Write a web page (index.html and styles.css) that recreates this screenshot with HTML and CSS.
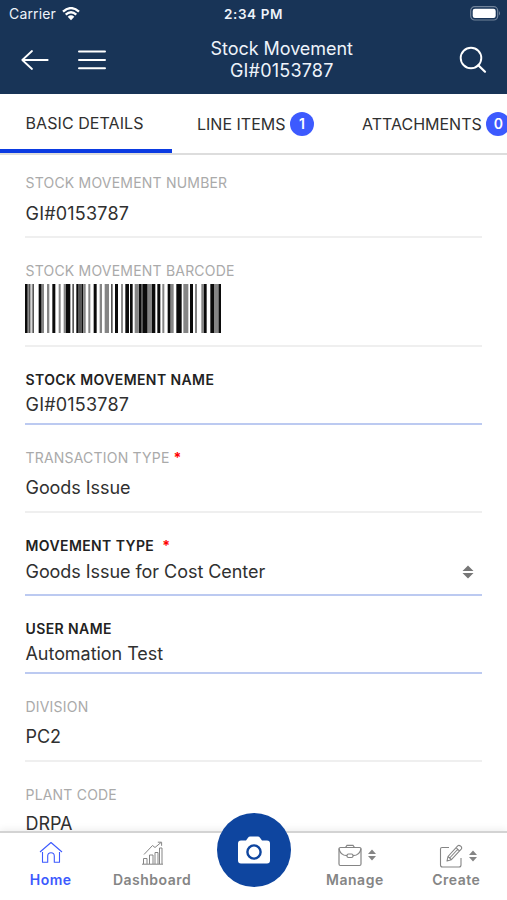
FILE: index.html
```html
<!DOCTYPE html>
<html lang="en">
<head>
<meta charset="utf-8">
<meta name="viewport" content="width=device-width, initial-scale=1">
<title>Stock Movement</title>
<link rel="stylesheet" href="styles.css">
</head>
<body>
<div class="app">
  <header class="header">
    <div class="status">
      <div class="carrier"><span>Carrier</span>
        <svg width="18" height="14" viewBox="0 0 18 14"><path d="M1 4.7Q9-2.5 17 4.7M3.7 7.6Q9 2.9 14.3 7.6" fill="none" stroke="#fff" stroke-width="2.3"/><path d="M5.7 9.7Q9 7 12.3 9.7L9 13.2Z" fill="#fff"/></svg>
      </div>
      <div class="time">2:34 PM</div>
      <svg class="battery" width="31" height="15" viewBox="0 0 31 15"><rect x=".7" y=".7" width="27" height="13.3" rx="4" fill="none" stroke="#71839a" stroke-width="1.2"/><rect x="2.7" y="2.7" width="23" height="9.3" rx="2.2" fill="#fff"/><path d="M29 5Q31 7.3 29 9.6Z" fill="#71839a"/></svg>
    </div>
    <div class="navbar">
      <div class="nav-left">
        <svg width="28" height="22" viewBox="0 0 28 22"><path d="M26.7 11H1.4M11 2L1.3 11L11 20" fill="none" stroke="#fff" stroke-width="1.8" stroke-linecap="round" stroke-linejoin="round"/></svg>
        <svg width="28" height="22" viewBox="0 0 28 22"><path d="M1 2.6H27M1 10.9H27M1 19.2H27" stroke="#fff" stroke-width="2" stroke-linecap="round"/></svg>
      </div>
      <h1 class="title">Stock Movement<br><span class="number">GI#0153787</span></h1>
      <svg class="search" width="28" height="28" viewBox="0 0 28 28"><circle cx="12" cy="12" r="10.3" fill="none" stroke="#fff" stroke-width="1.9"/><path d="M19.3 19.2L26 25.7" stroke="#fff" stroke-width="2.2" stroke-linecap="round"/></svg>
    </div>
  </header>
  <nav class="tabs">
    <div class="tab active">BASIC DETAILS</div>
    <div class="tab items">LINE ITEMS<span class="count">1</span></div>
    <div class="tab attach">ATTACHMENTS<span class="count">0</span></div>
  </nav>
  <main class="fields">
    <div class="field first"><div class="label">STOCK MOVEMENT NUMBER</div><div class="value number">GI#0153787</div></div>
    <div class="field code"><div class="label">STOCK MOVEMENT BARCODE</div>
      <svg class="barcode" width="197" height="49" viewBox="76 0 591 147" preserveAspectRatio="none">
        <path fill="#0b0b0b" d="M76 0h8v147h-8zM117 0h9v147h-9zM158 0h9v147h-9zM199 0h13v147h-13zM230 0h7v147h-7zM245 0h6v147h-6zM282 0h9v147h-9zM346 0h9v147h-9zM377 0h11v147h-11zM391 0h8v147h-8zM417 0h9v147h-9zM430 0h14v147h-14zM457 0h10v147h-10zM473 0h9v147h-9zM504 0h9v147h-9zM530 0h16v147h-16zM571 0h9v147h-9zM613 0h8v147h-8zM632 0h11v147h-11zM656 0h8v147h-8z"/>
        <path fill="#555" d="M86 0h5v147h-5zM98 0h5v147h-5zM218 0h5v147h-5zM237 0h8v147h-8zM334 0h5v147h-5zM365 0h4v147h-4zM426 0h4v147h-4z"/>
        <path fill="#858585" d="M92 0h3v147h-3zM126 0h7v147h-7zM142 0h7v147h-7zM177 0h6v147h-6zM192 0h7v147h-7zM251 0h7v147h-7zM266 0h6v147h-6zM300 0h7v147h-7zM315 0h13v147h-13zM405 0h12v147h-12zM444 0h13v147h-13zM488 0h6v147h-6zM513 0h9v147h-9zM551 0h15v147h-15zM586 0h6v147h-6zM605 0h8v147h-8zM643 0h13v147h-13z"/>
      </svg>
    </div>
    <div class="field edit"><div class="label">STOCK MOVEMENT NAME</div><div class="value number">GI#0153787</div></div>
    <div class="field"><div class="label">TRANSACTION TYPE<span class="req">*</span></div><div class="value">Goods Issue</div></div>
    <div class="field edit select"><div class="label">MOVEMENT TYPE<span class="req">*</span></div><div class="value"><span>Goods Issue for Cost Center</span>
      <svg width="12" height="14" viewBox="0 0 12 14"><path d="M6 .5L11.5 6H.5ZM6 13.5L.5 8H11.5Z" fill="#777"/></svg></div></div>
    <div class="field edit"><div class="label">USER NAME</div><div class="value">Automation Test</div></div>
    <div class="field"><div class="label">DIVISION</div><div class="value">PC2</div></div>
    <div class="field last"><div class="label">PLANT CODE</div><div class="value">DRPA</div></div>
  </main>
  <footer class="bottom">
    <div class="item home"><div class="icon">
      <svg width="24" height="24" viewBox="0 0 24 24" fill="none" stroke="currentColor" stroke-width="1.1" stroke-linejoin="round"><path d="M1 11L12 1.5L23 11M3.5 11V21.3H8.7V15Q8.7 11.7 12 11.7T15.3 15V21.3H20.5V11"/></svg></div><span>Home</span></div>
    <div class="item dashboard"><div class="icon">
      <svg width="24" height="24" viewBox="0 0 24 24" fill="none" stroke="currentColor" stroke-width="1"><path d="M1 23.2H22M2.5 23V17.5H6V23M8.5 23V14H12V23M14 23V11.5H17V23M18.5 23V7H21V23M3 13.5L11.5 4.5L14 6.5L20 1.5M16.8 1.2H20.6V4.8"/></svg></div><span>Dashboard</span></div>
    <div class="item camera"><div class="camera-button">
      <svg width="32" height="28" viewBox="0 0 32 28"><path d="M3 4.5H8L10 1.8Q10.8.5 12.2.5H19.8Q21.2.5 22 1.8L24 4.5H29Q32 4.5 32 7.5V24.5Q32 27.5 29 27.5H3Q0 27.5 0 24.5V7.5Q0 4.5 3 4.5Z" fill="#fff"/><circle cx="16" cy="16" r="6.6" fill="none" stroke="#0e459f" stroke-width="2.4"/></svg></div></div>
    <div class="item manage"><div class="icon">
      <svg width="24" height="24" viewBox="0 0 24 24" fill="none" stroke="currentColor" stroke-width="1.2"><rect x="1" y="4.5" width="22" height="18" rx="1.5"/><path d="M7.5 4.5L9 2.3H15L16.5 4.5M1 5.5Q2 12.3 9 12.7M15 12.7Q22 12.3 23 5.5"/><rect x="9" y="11" width="6" height="3.5" rx="1.5"/></svg>
      <svg class="sort" width="8" height="12" viewBox="0 0 8 12"><path d="M4 .5L8 5H0ZM4 11.5L0 7H8Z" fill="currentColor"/></svg></div><span>Manage</span></div>
    <div class="item create"><div class="icon">
      <svg width="24" height="24" viewBox="0 0 24 24" fill="none" stroke="currentColor" stroke-width="1.1" stroke-linejoin="round"><path d="M10 3.5H3Q1.5 3.5 1.5 5V21Q1.5 23 3.5 23H20Q22 23 22 21V14M8 17L9 12.5L18.7 1.8Q20 .7 21.7 2.2T22.2 5.1L12.4 15.7ZM9 12.5L12.4 15.7M17 3.7L20.4 6.9M10.7 14L19 5"/></svg>
      <svg class="sort" width="8" height="12" viewBox="0 0 8 12"><path d="M4 .5L8 5H0ZM4 11.5L0 7H8Z" fill="currentColor"/></svg></div><span>Create</span></div>
  </footer>
</div>
</body>
</html>
```
FILE: styles.css
```css
* { box-sizing: border-box; }
body { margin: 0; font-family: Inter, "Liberation Sans", sans-serif; color: #303030; background: #fff; }
svg { display: block; flex: none; }
.app { height: 900px; display: flex; flex-direction: column; overflow: hidden; }
.header { flex: none; height: 94px; background: #183457; color: #eef3fa; }
.status { height: 27px; display: grid; grid-template-columns: 1fr auto 1fr; align-items: center; padding: 0 6px 0 9px; }
.carrier { display: flex; align-items: center; gap: 6px; font-size: 14px; letter-spacing: .15px; }
.time { font-size: 13.5px; font-weight: 600; letter-spacing: .6px; margin-left: -3px; }
.battery { justify-self: end; }
.navbar { height: 66px; display: grid; grid-template-columns: 1fr auto 1fr; align-items: center; padding: 0 20px 0 20.5px; }
.nav-left { display: flex; gap: 29px; }
.title { margin: 0; padding-left: 56px; text-align: center; font-size: 18px; font-weight: 400; line-height: 22px; letter-spacing: -.05px; }
.search { justify-self: end; }
.tabs { flex: none; height: 61px; display: flex; border-bottom: 2px solid #ddd; overflow: hidden; }
.tab { flex: none; height: 60px; display: flex; align-items: center; font-size: 16px; padding-bottom: 1px; white-space: nowrap; }
.active { width: 172px; letter-spacing: .08px; padding: 3px 0 0 25.5px; border-bottom: 5px solid #0b3be2; }
.items { width: 165px; padding-left: 25px; }
.attach { padding-left: 25px; }
.count { width: 24px; height: 24px; margin-left: 4.5px; border-radius: 50%; background: #3d5afe; color: #fff; font-size: 14px; font-weight: 600; line-height: 24px; text-align: center; }
.fields { flex: 1; min-height: 0; overflow: hidden; padding: 0 25px; }
.field { height: 88px; padding-top: 23px; border-bottom: 2px solid #efefef; }
.label, .value { padding-left: .5px; }
.first { height: 83px; padding-top: 18px; }
.first .value { margin-top: 9px; }
.code { height: 109px; }
.label { height: 20px; line-height: 20px; font-size: 14px; color: #aaa; letter-spacing: .2px; }
.value { height: 24px; margin-top: 8px; line-height: 24px; font-size: 18px; letter-spacing: -.05px; }
.number { letter-spacing: .2px; }
.barcode { margin-top: 3px; }
.edit { height: 78px; border-bottom: 2px solid #bccaf1; }
.edit .label { font-weight: 600; color: #222; letter-spacing: .4px; }
.edit .value { margin-top: 3px; }
.select { height: 83px; }
.select .value { margin-top: 4px; display: flex; justify-content: space-between; align-items: center; padding-right: 8px; }
.last .value { margin-top: 7px; }
.req { color: #f00; margin-left: 4px; font-weight: 700; }
.select .req { margin-left: 8px; }
.bottom { flex: none; height: 69px; display: grid; grid-template-columns: repeat(5, 1fr); border-top: 2px solid #d3d3d3; background: #fff; color: #858585; box-shadow: 0 -2px 7px #0001; position: relative; }
.item { display: flex; flex-direction: column; align-items: center; padding-top: 8px; font-size: 14px; font-weight: 600; letter-spacing: .5px; }
.item > span { line-height: 20px; margin-top: 5px; }
.icon { height: 24px; display: flex; align-items: center; gap: 6px; padding-left: 1px; }
.manage .icon, .create .icon { padding: 5px 0 0 4px; }
.manage .icon { padding-top: 3px; }
.home { color: #3d5afe; }
.camera { padding: 0; }
.camera-button { flex: none; width: 74px; height: 74px; margin: -20px 0 0 1px; border-radius: 50%; background: #0e459f; display: flex; align-items: center; justify-content: center; }
```
